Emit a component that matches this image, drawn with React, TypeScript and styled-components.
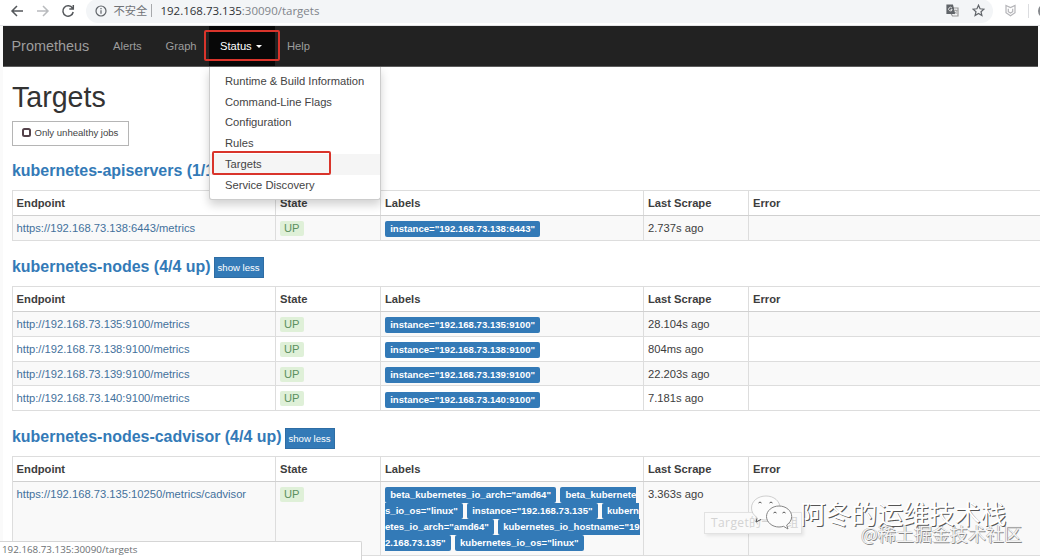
import React from "react";
import styled, { createGlobalStyle } from "styled-components";

const Global = createGlobalStyle`
  * { box-sizing: border-box; }
  html, body { margin: 0; padding: 0; overflow: hidden; background: #fff; }
  body { font-family: "Liberation Sans", Arial, sans-serif; font-size: 11.2px; line-height: 16px; color: #333; }
`;

const Screen = styled.div`
  position: relative;
  width: 1040px;
  height: 560px;
  overflow: hidden;
  background: #fff;
`;

const BrowserBar = styled.header`
  display: flex;
  align-items: center;
  height: 26px;
  padding: 0 0 4px 10px;
  border-bottom: 1px solid #e4e5e7;
  color: #5f6368;
`;

const BrowserButton = styled.svg<{ $faded?: boolean }>`
  flex: none;
  width: 14px;
  height: 14px;
  margin-right: 11.5px;
  fill: none;
  stroke: ${(p) => (p.$faded ? "#b9bbbe" : "#54575b")};
  stroke-width: 1.5;
`;

const AddressBar = styled.div`
  display: flex;
  flex: none;
  align-items: center;
  width: 907px;
  height: 24px;
  margin-left: -1px;
  padding-left: 9px;
  border-radius: 12px;
  background: #f3f5f7;
`;

const Insecure = styled.span`
  margin-left: 7px;
  padding-right: 4px;
  border-right: 1px solid #a7a9ac;
  font: 11.3px/13px "Noto Sans CJK SC", sans-serif;
  color: #707377;
`;

const Url = styled.span`
  flex: 1;
  margin-left: 8px;
  font: 11.5px/16px "Open Sans", sans-serif;
  color: #80848a;
  b { font-weight: 400; color: #303236; }
`;

const ToolIcon = styled.svg`
  width: 13px;
  height: 13px;
  margin-right: 13px;
  fill: none;
  stroke: #606469;
  stroke-width: 1.2;
  &:last-child { margin-right: 8px; }
`;

const ExtensionIcon = styled(ToolIcon)`
  flex: none;
  margin: 0 11px;
`;

const BarDivider = styled.i`
  flex: none;
  width: 1px;
  height: 14px;
  margin-right: 9px;
  background: #dcdde0;
`;

const Avatar = styled.i`
  flex: none;
  width: 14px;
  height: 14px;
  border: 2px solid #85888c;
  border-radius: 50%;
`;

const Page = styled.div`
  height: 534px;
  border-left: 3px solid #fafafa;
`;

const Navbar = styled.nav`
  display: flex;
  align-items: center;
  width: 1035px;
  height: 41px;
  background: #222;
  border-bottom: 1px solid #5c5c5c;
  color: #9d9d9d;
`;

const Brand = styled.span`
  width: 98px;
  padding-left: 8.5px;
  font-size: 14.4px;
`;

const NavItem = styled.span<{ $width: number; $open?: boolean }>`
  display: flex;
  align-items: center;
  align-self: stretch;
  width: ${(p) => p.$width}px;
  padding-left: ${(p) => (p.$open ? 11 : 12)}px;
  background: ${(p) => (p.$open ? "#080808" : "transparent")};
  color: ${(p) => (p.$open ? "#fff" : "#9d9d9d")};
`;

const Caret = styled.i`
  margin-left: 4.5px;
  border: 3.2px solid transparent;
  border-top-color: #fff;
  border-bottom: 0;
`;

const Marker = styled.div<{ $x: number; $y: number; $w: number; $h: number }>`
  position: absolute;
  left: ${(p) => p.$x}px;
  top: ${(p) => p.$y}px;
  width: ${(p) => p.$w}px;
  height: ${(p) => p.$h}px;
  border: 2px solid #d9342b;
  border-radius: 2px;
`;

const Menu = styled.div`
  position: absolute;
  left: 209px;
  top: 67px;
  width: 172px;
  height: 133px;
  padding: 3.8px 0;
  border: 1px solid #ccc;
  border-top: 0;
  border-radius: 0 0 3px 3px;
  background: #fff;
  box-shadow: 0 5px 10px rgba(0, 0, 0, 0.18);
`;

const MenuItem = styled.div<{ $active?: boolean }>`
  height: 20.8px;
  padding-left: 15px;
  line-height: 20.8px;
  color: #444;
  background: ${(p) => (p.$active ? "#f5f5f5" : "transparent")};
`;

const Content = styled.main`
  width: 1060px;
  padding-left: 9px;
`;

const Title = styled.h1`
  margin: 0;
  padding-top: 14px;
  font-size: 28.6px;
  line-height: 32px;
  font-weight: 400;
`;

const FilterButton = styled.button`
  display: flex;
  align-items: center;
  width: 117px;
  height: 25px;
  margin-top: 8px;
  padding: 0 0 2px 9px;
  border: 1px solid #b5b5b5;
  background: #fff;
  font: 9.6px "Liberation Sans", Arial, sans-serif;
  letter-spacing: -0.02px;
  color: #444;
`;

const CheckBox = styled.i`
  width: 9px;
  height: 9px;
  margin-right: 3.5px;
  border: 2px solid #54424a;
  border-radius: 2.5px;
`;

const Job = styled.section<{ $gap: number }>`
  padding-top: ${(p) => p.$gap}px;
`;

const JobHeader = styled.h2`
  display: flex;
  align-items: center;
  height: 22px;
  margin: 0 0 8px;
  font-size: 15.96px;
  line-height: 20px;
  color: #337ab7;
`;

const ShowLess = styled.button`
  width: 50px;
  height: 21px;
  margin: 2px 0 0 3px;
  padding: 0;
  border: 1px solid #2e6da4;
  background: #337ab7;
  font: 9.6px "Liberation Sans", Arial, sans-serif;
  color: #fff;
`;

const Table = styled.div`
  width: 1051px;
  border: solid #ddd;
  border-width: 1px 1px 0;
`;

const Row = styled.div<{ $head?: boolean; $striped?: boolean; $height?: number }>`
  display: grid;
  grid-template-columns: 263px 105px 263px 105px 1fr;
  height: ${(p) => p.$height ?? (p.$head ? 25.4 : 24.8)}px;
  border-bottom: 1px solid ${(p) => (p.$head ? "#d0d0d0" : "#ddd")};
  background: ${(p) => (p.$striped ? "#f9f9f9" : "#fff")};
  font-weight: ${(p) => (p.$head ? 700 : 400)};
`;

const Cell = styled.div`
  padding: 4px 4px 0 4px;
  border-right: 1px solid #ddd;
  color: #3d3d3d;
  &:first-child { padding-left: 3.6px; }
`;

const Link = styled.a`
  color: #43719c;
`;

const State = styled.span`
  display: inline-block;
  height: 15px;
  padding: 0 4px;
  border-radius: 2px;
  background: #dff0d8;
  line-height: 15px;
  color: #5c9160;
`;

const Label = styled.span`
  display: block;
  width: fit-content;
  height: 16px;
  margin-top: 1.4px;
  padding: 0 5.2px;
  border-radius: 2px;
  background: #337ab7;
  font-size: 9.6px;
  font-weight: 700;
  line-height: 15px;
  color: #fff;
`;

const LabelLine = styled.div`
  display: flex;
  gap: 4px;
  height: 16px;
  width: 258px;
  white-space: nowrap;
  &:first-child { margin-top: 0.6px; }
`;

const LabelPart = styled.span<{ $from?: boolean; $to?: boolean }>`
  height: 16px;
  padding: 0 ${(p) => (p.$to ? 0 : 5.2)}px 0 ${(p) => (p.$from ? 0 : 5.2)}px;
  border-radius: ${(p) => (p.$from ? "0 2px 2px 0" : p.$to ? "2px 0 0 2px" : "2px")};
  background: #337ab7;
  font-size: 9.6px;
  font-weight: 700;
  line-height: 16px;
  color: #fff;
`;

const StatusBubble = styled.div`
  position: absolute;
  left: 0;
  bottom: 0;
  width: 362px;
  height: 19px;
  padding: 0 0 0 2px;
  border: 1px solid #d5d5d5;
  border-width: 1px 1px 0 0;
  border-radius: 0 2px 0 0;
  background: #fff;
  font: 9.8px/16px "Open Sans", sans-serif;
  color: #6c6f73;
`;

const Tooltip = styled.div`
  position: absolute;
  left: 704px;
  top: 512px;
  width: 98px;
  height: 22px;
  padding-left: 6px;
  border: 1px solid #e2e2e2;
  background: #fafafa;
  box-shadow: 2px 2px 3px rgba(0, 0, 0, 0.08);
  font: 12px/20px "Open Sans", "Noto Sans CJK SC", sans-serif;
  letter-spacing: 0.4px;
  white-space: nowrap;
  color: #d3d3d3;
`;

const Chat = styled.svg`
  position: absolute;
  left: 750px;
  top: 494px;
  width: 46px;
  height: 38px;
`;

const ChannelMark = styled.div`
  position: absolute;
  left: 800px;
  top: 495px;
  font: 25.8px/36px "Noto Sans CJK SC", sans-serif;
  white-space: nowrap;
  color: #fff;
  text-shadow: 1px 1px 0 #555;
`;

const SiteMark = styled.div`
  position: absolute;
  left: 861px;
  top: 520px;
  font: 18px/26px "Noto Sans CJK SC", sans-serif;
  white-space: nowrap;
  color: #f4f4f4;
  text-shadow: 0.7px 0.7px 0 #888, -0.5px -0.5px 0 #aaa;
`;

const menu = ["Runtime & Build Information", "Command-Line Flags", "Configuration", "Rules", "Targets", "Service Discovery"];

const nodes = [
  ["192.168.73.135:9100", "28.104s ago"],
  ["192.168.73.138:9100", "804ms ago"],
  ["192.168.73.139:9100", "22.203s ago"],
  ["192.168.73.140:9100", "7.181s ago"],
];

const HeadRow = () => (
  <Row $head>
    {["Endpoint", "State", "Labels", "Last Scrape", "Error"].map((t) => (
      <Cell key={t}>{t}</Cell>
    ))}
  </Row>
);

type TargetProps = { url: string; scrape: string; striped?: boolean; height?: number; children: React.ReactNode };

const Target = ({ url, scrape, striped, height, children }: TargetProps) => (
  <Row $striped={striped} $height={height}>
    <Cell><Link>{url}</Link></Cell>
    <Cell><State>UP</State></Cell>
    <Cell>{children}</Cell>
    <Cell>{scrape}</Cell>
    <Cell />
  </Row>
);

export default function App() {
  return (
    <Screen>
      <Global />
      <BrowserBar>
        <BrowserButton viewBox="0 0 14 14"><path d="M13 7H2M7 2L2 7l5 5" /></BrowserButton>
        <BrowserButton viewBox="0 0 14 14" $faded><path d="M1 7h11M7 2l5 5-5 5" /></BrowserButton>
        <BrowserButton viewBox="0 0 14 14"><path d="M11.5 4.2A5.2 5.2 0 1 0 12.2 8M12.3 1v4H8.3" /></BrowserButton>
        <AddressBar>
          <svg width="12" height="12" viewBox="0 0 12 12" fill="none" stroke="#606469" strokeWidth="1.2">
            <circle cx="6" cy="6" r="5" /><path d="M6 5.2v3.6M6 3v1.2" />
          </svg>
          <Insecure>不安全</Insecure>
          <Url><b>192.168.73.135</b>:30090/targets</Url>
          <ToolIcon viewBox="0 0 13 13">
            <path d="M5.5 4h6.5v8H6.5L5 9.5" stroke="#999" />
            <path d="M1 1h5.5l2 8.5H1z" fill="#606469" />
            <path d="M6 4.2A1.8 1.8 0 1 0 6.2 5.6H4.6" stroke="#fff" strokeWidth=".8" />
            <path d="M8 6.5h3.5M9.8 5.5v1M11 6.5c-.4 1.6-1.4 2.6-2.4 3.3M8.8 7.5l2.2 2.3" stroke="#999" strokeWidth=".8" />
          </ToolIcon>
          <ToolIcon viewBox="0 0 13 13"><path d="M6.5 1.2l1.55 3.6 3.95.35-3 2.6.9 3.85-3.4-2.05-3.4 2.05.9-3.85-3-2.6 3.95-.35z" /></ToolIcon>
        </AddressBar>
        <ExtensionIcon viewBox="0 0 13 13">
          <path d="M2 1.5l4.5 2 4.5-2v7.2l-4.5 3-4.5-3zM4.3 4.8v2.9l2.2 1.4 2.2-1.4V4.8" stroke="#b4b4b8" />
        </ExtensionIcon>
        <BarDivider />
        <Avatar />
      </BrowserBar>
      <Page>
        <Navbar>
          <Brand>Prometheus</Brand>
          <NavItem $width={52.5}>Alerts</NavItem>
          <NavItem $width={55.5}>Graph</NavItem>
          <NavItem $width={66} $open>Status<Caret /></NavItem>
          <NavItem $width={50}>Help</NavItem>
        </Navbar>
        <Content>
          <Title>Targets</Title>
          <FilterButton><CheckBox />Only unhealthy jobs</FilterButton>
          <Job $gap={13.7}>
            <JobHeader>kubernetes-apiservers (1/1</JobHeader>
            <Table>
              <HeadRow />
              <Target url="https://192.168.73.138:6443/metrics" scrape="2.737s ago" striped>
                <Label>instance="192.168.73.138:6443"</Label>
              </Target>
            </Table>
          </Job>
          <Job $gap={14.7}>
            <JobHeader>kubernetes-nodes (4/4 up)<ShowLess>show less</ShowLess></JobHeader>
            <Table>
              <HeadRow />
              {nodes.map(([host, scrape], i) => (
                <Target key={host} url={`http://${host}/metrics`} scrape={scrape} striped={i % 2 === 0}>
                  <Label>instance="{host}"</Label>
                </Target>
              ))}
            </Table>
          </Job>
          <Job $gap={14.9}>
            <JobHeader>kubernetes-nodes-cadvisor (4/4 up)<ShowLess>show less</ShowLess></JobHeader>
            <Table>
              <HeadRow />
              <Target url="https://192.168.73.135:10250/metrics/cadvisor" scrape="3.363s ago" striped height={73.6}>
                <LabelLine>
                  <LabelPart>beta_kubernetes_io_arch="amd64"</LabelPart>
                  <LabelPart $to>beta_kubernete</LabelPart>
                </LabelLine>
                <LabelLine>
                  <LabelPart $from>s_io_os="linux"</LabelPart>
                  <LabelPart>instance="192.168.73.135"</LabelPart>
                  <LabelPart $to>kubern</LabelPart>
                </LabelLine>
                <LabelLine>
                  <LabelPart $from>etes_io_arch="amd64"</LabelPart>
                  <LabelPart $to>kubernetes_io_hostname="19</LabelPart>
                </LabelLine>
                <LabelLine>
                  <LabelPart $from>2.168.73.135"</LabelPart>
                  <LabelPart>kubernetes_io_os="linux"</LabelPart>
                </LabelLine>
              </Target>
            </Table>
          </Job>
        </Content>
      </Page>
      <Menu>
        {menu.map((m) => <MenuItem key={m} $active={m === "Targets"}>{m}</MenuItem>)}
      </Menu>
      <Marker $x={204} $y={30} $w={76} $h={31} />
      <Marker $x={212} $y={151} $w={119} $h={24} />
      <StatusBubble>192.168.73.135:30090/targets</StatusBubble>
      <Tooltip>Target的一个组</Tooltip>
      <SiteMark>@稀土掘金技术社区</SiteMark>
      <Chat viewBox="0 0 46 38">
        <g fill="#fcfcfc">
          <path d="M16 2C8 2 1.5 7 1.5 14c0 4 2 7 5.5 9.5L6 28l5-2.500c8 2 19-1 19-11.5C30 7 24 2 16 2z" stroke="#bbb" strokeWidth="0.7" />
          <path d="M29 12c-7 0-12.5 4.8-12.5 10.5S22 33 29 33c1.5 0 3-.2 4.5-.7L38 35l-1.300-4c3-2 5-5 5-8.5C41.7 16.8 36 12 29 12z" stroke="#777" strokeWidth="0.9" />
        </g>
        <g fill="none" stroke="#555"><path d="M8.500 9q1.5-2 3 0M19.5 9q1.5-2 3 0M23.5 19q1.5-2 3 0M32.5 19q1.5-2 3 0M7 24.5l-1 3.5 5-2.5" /></g>
      </Chat>
      <ChannelMark>阿冬的运维技术栈</ChannelMark>
    </Screen>
  );
}
